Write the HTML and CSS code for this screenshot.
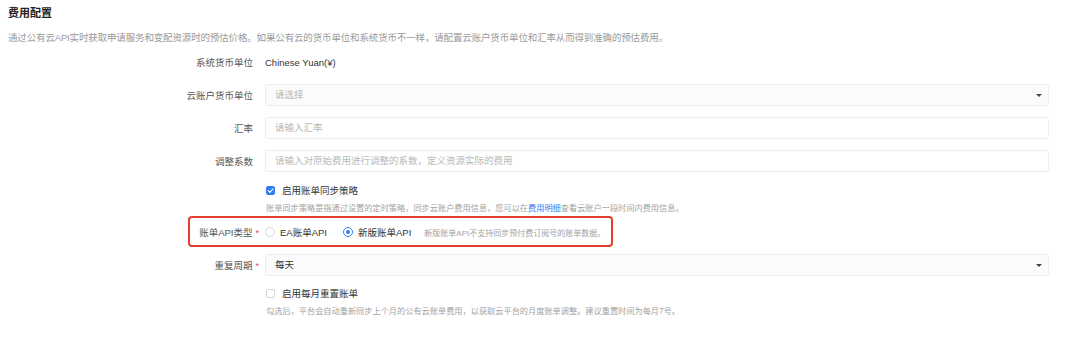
FILE: index.html
```html
<!DOCTYPE html>
<html>
<head>
    <link rel="stylesheet" href="styles.css">
</head>
<body>
<div class="page">
    <h2 class="title">费用配置</h2>
    <p class="desc">通过公有云API实时获取申请服务和变配资源时的预估价格。如果公有云的货币单位和系统货币不一样，请配置云账户货币单位和汇率从而得到准确的预估费用。</p>

    <div class="form">
        <div class="form-item">
            <label class="label">系统货币单位</label>
            <div class="control text-value">Chinese Yuan(¥)</div>
        </div>
        <div class="form-item">
            <label class="label">云账户货币单位</label>
            <div class="control">
                <div class="select placeholder">请选择<span class="caret"></span></div>
            </div>
        </div>
        <div class="form-item">
            <label class="label">汇率</label>
            <div class="control">
                <div class="input placeholder">请输入汇率</div>
            </div>
        </div>
        <div class="form-item">
            <label class="label">调整系数</label>
            <div class="control">
                <div class="input placeholder">请输入对原始费用进行调整的系数，定义资源实际的费用</div>
            </div>
        </div>

        <div class="check-row">
            <span class="checkbox checked">
                <svg viewBox="0 0 10 10" width="7" height="7"><path d="M1.5 5.2 L4 7.6 L8.6 2.6" fill="none" stroke="#fff" stroke-width="1.6" stroke-linecap="round" stroke-linejoin="round"/></svg>
            </span>
            <span class="check-text">启用账单同步策略</span>
        </div>
        <div class="help">账单同步策略是指通过设置的定时策略，同步云账户费用信息，您可以在<a class="link">费用明细</a>查看云账户一段时间内费用信息。</div>

        <div class="form-item api-row">
            <div class="highlight"></div>
            <label class="label required">账单API类型</label>
            <div class="control radios">
                <span class="radio"></span><span class="radio-text">EA账单API</span>
                <span class="radio checked"></span><span class="radio-text">新版账单API</span>
                <span class="radio-hint">新版账单API不支持同步预付费订阅号的账单数据。</span>
            </div>
        </div>

        <div class="form-item period">
            <label class="label required">重复周期</label>
            <div class="control">
                <div class="select">每天<span class="caret"></span></div>
            </div>
        </div>

        <div class="check-row">
            <span class="checkbox"></span>
            <span class="check-text">启用每月重置账单</span>
        </div>
        <div class="help">勾选后，平台会自动重新同步上个月的公有云账单费用，以获取云平台的月度账单调整。建议重置时间为每月7号。</div>
    </div>
</div>
</body>
</html>
```

FILE: styles.css
```css
body {
    margin: 0;
    background: #fff;
    font-family: "Liberation Sans", "Noto Sans CJK SC", sans-serif;
    color: #333;
}

.page {
    padding: 6px 8px;
}

.title {
    margin: 0;
    font-size: 11px;
    line-height: 14px;
    font-weight: 700;
    color: #222;
}

.desc {
    margin: 11px 0 0;
    font-size: 9.5px;
    letter-spacing: -0.15px;
    line-height: 13px;
    color: #9a9a9a;
}

.form {
    margin-top: 7px;
    width: 1041px;
}

.form-item {
    position: relative;
    display: flex;
    align-items: center;
    height: 22px;
    margin-bottom: 11px;
}

.label {
    width: 245px;
    flex: none;
    text-align: right;
    font-size: 9.5px;
    color: #555;
    margin-right: 12px;
}

.label.required::after {
    content: "*";
    color: #e8413b;
    margin-left: 3px;
    margin-right: -6px;
    font-size: 9px;
}

.control {
    flex: 1;
    min-width: 0;
}

.text-value {
    font-size: 9.5px;
    color: #333;
}

.select, .input {
    position: relative;
    height: 22px;
    box-sizing: border-box;
    border: 1px solid #ededed;
    border-radius: 3px;
    padding: 0 9px;
    font-size: 9.5px;
    line-height: 20px;
    color: #333;
    background: #fff;
}

.select {
    background: #fbfbfb;
}

.placeholder {
    color: #b8b8b8;
}

.caret {
    position: absolute;
    right: 6px;
    top: 9px;
    width: 0;
    height: 0;
    border-left: 3px solid transparent;
    border-right: 3px solid transparent;
    border-top: 3px solid #444;
}

.check-row {
    display: flex;
    align-items: center;
    height: 14px;
    padding-left: 258px;
}

.checkbox {
    width: 9px;
    height: 9px;
    box-sizing: border-box;
    border: 1px solid #d6d6d6;
    border-radius: 2px;
    background: #fff;
    display: flex;
    align-items: center;
    justify-content: center;
    margin-right: 7px;
}

.checkbox.checked {
    background: #2f7cf6;
    border-color: #2f7cf6;
}

.check-text {
    font-size: 9.5px;
    color: #333;
}

.help {
    margin-top: 6px;
    padding-left: 258px;
    font-size: 8.2px;
    line-height: 12px;
    color: #a3a3a3;
}

.link {
    color: #2f7cf6;
}

.api-row {
    margin-top: 6px;
}

.highlight {
    position: absolute;
    left: 180px;
    top: -5px;
    width: 425px;
    height: 31px;
    box-sizing: border-box;
    border: 2px solid #e2402c;
    border-radius: 4px;
    pointer-events: none;
}

.radios {
    display: flex;
    align-items: center;
}

.radio {
    width: 10px;
    height: 10px;
    box-sizing: border-box;
    border: 1px solid #d9d9d9;
    border-radius: 50%;
    background: #fff;
    margin-right: 5px;
    position: relative;
}

.radio.checked {
    border-color: #2f7cf6;
}

.radio.checked::after {
    content: "";
    position: absolute;
    left: 2px;
    top: 2px;
    width: 4px;
    height: 4px;
    border-radius: 50%;
    background: #2f7cf6;
}

.radio-text {
    font-size: 9.5px;
    color: #333;
    margin-right: 16px;
}

.radio-hint {
    font-size: 8px;
    color: #a3a3a3;
    margin-left: -3px;
}

.period {
    margin-bottom: 10px;
}
```
